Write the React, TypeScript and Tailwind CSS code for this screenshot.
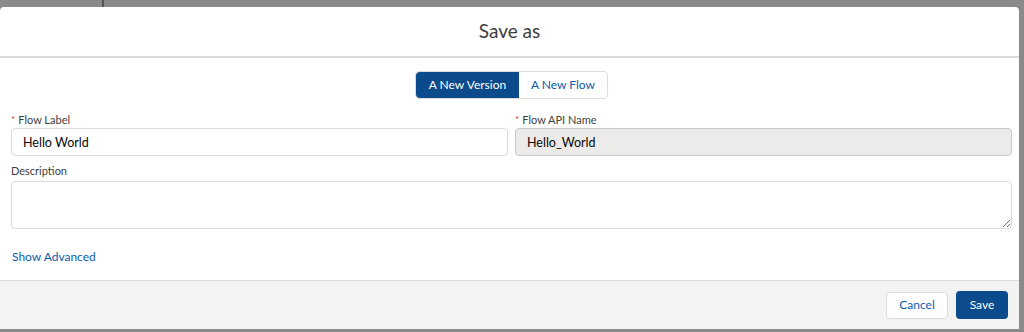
import { useState } from "react"

const font = { fontFamily: 'Lato, "Liberation Sans", Arial, sans-serif' }

function RequiredLabel({ text, required }: { text: string; required?: boolean }) {
  return (
    <label className="flex h-[16px] items-center text-[11px] text-[#3e3e3c]">
      {required ? <span className="mr-[3px] -mt-[3px] text-[10px] leading-none text-[#c23934]">*</span> : null}
      {text}
    </label>
  )
}

export default function App() {
  const [mode, setMode] = useState<"version" | "flow">("version")

  return (
    <div className="flex h-[332px] w-[1024px] flex-col bg-[#8a8a8a]" style={font}>
      <div className="flex h-[7px] shrink-0">
        <div className="ml-[102px] h-full w-[2px] bg-[#555]" />
      </div>
      <div className="flex h-[322px] w-[1019px] flex-col overflow-hidden rounded-t-[4px] bg-white">
        <div className="flex h-[51px] shrink-0 items-center justify-center border-b-2 border-[#dddbda]">
          <h2 className="text-[19px] font-normal text-[#3e3e3c]">Save as</h2>
        </div>

        <div className="flex flex-1 flex-col pl-[11px] pr-[7px] pt-[13px]">
          <div className="flex justify-center">
            <div className="flex h-[28px] rounded-[4px] border border-[#dddbda] text-[12px]">
              <button
                type="button"
                onClick={() => setMode("version")}
                className={`w-[103px] rounded-l-[4px] ${
                  mode === "version" ? "bg-[#0b4a8b] text-white" : "bg-white text-[#0b5cab]"
                }`}
              >
                A New Version
              </button>
              <button
                type="button"
                onClick={() => setMode("flow")}
                className={`w-[88px] rounded-r-[4px] ${
                  mode === "flow" ? "bg-[#0b4a8b] text-white" : "bg-white text-[#0b5cab]"
                }`}
              >
                A New Flow
              </button>
            </div>
          </div>

          <div className="mt-[13px] grid grid-cols-2 gap-[7px]">
            <div className="flex flex-col">
              <RequiredLabel text="Flow Label" required />
              <input
                defaultValue="Hello World"
                className="h-[28px] rounded-[4px] border border-[#dddbda] px-[11px] text-[12.5px] text-[#080707] outline-none"
              />
            </div>
            <div className="flex flex-col">
              <RequiredLabel text="Flow API Name" required />
              <input
                value="Hello_World"
                readOnly
                className="h-[28px] rounded-[4px] border border-[#c9c7c5] bg-[#ecebea] px-[11px] text-[12.5px] text-[#080707] outline-none"
              />
            </div>
          </div>

          <div className="mt-[7px] flex flex-col">
            <RequiredLabel text="Description" />
            <textarea className="mt-[2px] h-[48px] resize-y rounded-[4px] border border-[#dddbda] px-[11px] py-[6px] text-[12.5px] outline-none" />
          </div>

          <div className="mt-[14px] pl-[1px]">
            <button type="button" className="text-[12px] text-[#0b5cab]">
              Show Advanced
            </button>
          </div>
        </div>

        <div className="flex h-[49px] shrink-0 items-center justify-end gap-[8px] border-t border-[#dddbda] bg-[#f3f3f3] pr-[11px]">
          <button
            type="button"
            className="h-[27px] w-[62px] rounded-[4px] border border-[#dddbda] bg-white text-[12px] text-[#0b5cab]"
          >
            Cancel
          </button>
          <button
            type="button"
            className="h-[28px] w-[52px] rounded-[4px] bg-[#0b4a8b] text-[12px] text-white"
          >
            Save
          </button>
        </div>
      </div>
    </div>
  )
}
